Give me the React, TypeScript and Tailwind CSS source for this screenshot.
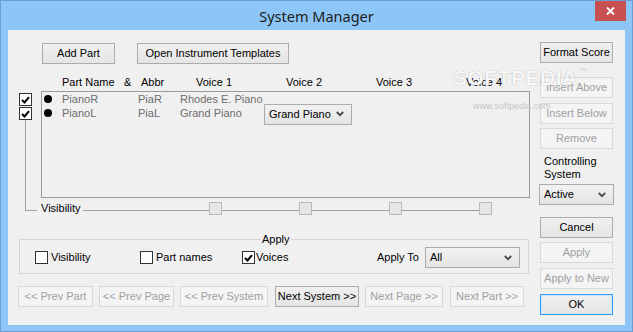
import React from "react";

function Check({ checked = false }: { checked?: boolean }) {
  return (
    <div className="w-[13px] h-[13px] border border-[#333333] bg-white flex items-center justify-center shrink-0">
      {checked && (
        <svg width="9" height="8" viewBox="0 0 9 8">
          <path d="M1 4 L3.5 6.5 L8 1.2" fill="none" stroke="#000" strokeWidth="2" />
        </svg>
      )}
    </div>
  );
}

function Btn({
  label,
  cls,
  disabled = false,
  def = false,
}: {
  label: string;
  cls: string;
  disabled?: boolean;
  def?: boolean;
}) {
  const look = disabled
    ? "border-[#d9d9d9] bg-[#f4f4f4] text-[#a0a0a0]"
    : def
    ? "border-[#3399ff] bg-linear-to-b from-[#f0f0f0] to-[#e5e5e5] text-black shadow-[inset_0_0_0_1px_#cfe6fc]"
    : "border-[#acacac] bg-linear-to-b from-[#f0f0f0] to-[#e5e5e5] text-black";
  return (
    <div className={`h-[21px] flex items-center justify-center shrink-0 border whitespace-nowrap ${look} ${cls}`}>
      {label}
    </div>
  );
}

function Chevron() {
  return (
    <svg width="8" height="6" viewBox="0 0 8 6">
      <path d="M0.8 1 L4 4.2 L7.2 1" fill="none" stroke="#4a4a4a" strokeWidth="1.8" />
    </svg>
  );
}

function Select({ value, cls }: { value: string; cls: string }) {
  return (
    <div
      className={`h-[21px] border border-[#acacac] bg-linear-to-b from-[#f2f2f2] to-[#e4e4e4] flex items-center justify-between pl-[4px] pr-[7px] shrink-0 text-black ${cls}`}
    >
      <span>{value}</span>
      <Chevron />
    </div>
  );
}

function Sq() {
  return <div className="w-[13px] h-[13px] border border-[#b9b9b9] bg-[#e6e6e6] shrink-0" />;
}

export default function App() {
  return (
    <div className="relative w-[633px] h-[332px] bg-[#8cc5f6] border border-[#6b9fd2] flex flex-col overflow-hidden font-['Liberation_Sans',Arial,sans-serif] text-[11px] leading-[13px] text-black">
      {/* Title bar */}
      <div className="relative h-[29px] shrink-0 flex justify-center pt-[5px]">
        <span className="font-['Noto_Sans',sans-serif] text-[14.5px] leading-[20px] text-[#1c1c1c]">
          System Manager
        </span>
        <div className="absolute right-[6px] top-0 w-[31px] h-[20px] bg-[#c75050] flex items-center justify-center">
          <svg width="9" height="8" viewBox="0 0 9 8">
            <path d="M1 0.5 L8 7.5 M8 0.5 L1 7.5" stroke="#fff" strokeWidth="1.9" />
          </svg>
        </div>
      </div>

      {/* Client */}
      <div className="mx-[7px] h-[295px] shrink-0 bg-[#f0f0f0] flex">
        {/* Left column */}
        <div className="w-[523px] shrink-0 flex flex-col items-start">
          <div className="mt-[13px] ml-[34px] flex">
            <Btn label="Add Part" cls="w-[73px]" />
            <Btn label="Open Instrument Templates" cls="w-[152px] ml-[22px]" />
          </div>

          <div className="mt-[12px] ml-[54px] flex h-[13px] whitespace-nowrap">
            <div className="w-[62px]">Part Name</div>
            <div className="w-[17px]">&amp;</div>
            <div className="w-[55px]">Abbr</div>
            <div className="w-[90px]">Voice 1</div>
            <div className="w-[90px]">Voice 2</div>
            <div className="w-[90px]">Voice 3</div>
            <div>Voice 4</div>
          </div>

          {/* List section */}
          <div className="mt-[2px] flex h-[107px]">
            <div className="w-[33px] flex flex-col">
              <div className="ml-[11px] mt-[2px] flex flex-col gap-[1px]">
                <Check checked />
                <Check checked />
              </div>
              <div className="ml-[17px] w-px flex-1 bg-[#a0a0a0]" />
            </div>
            <div className="w-[489px] h-full border border-[#9a9a9a] whitespace-nowrap">
              <div className="flex h-[14px] items-center text-[#6d6d6d]">
                <div className="w-[20px] pl-[2px]">
                  <div className="w-[8px] h-[8px] rounded-full bg-black" />
                </div>
                <div className="w-[76px]">PianoR</div>
                <div className="w-[42px]">PiaR</div>
                <div className="w-[84px]">Rhodes E. Piano</div>
              </div>
              <div className="flex h-[14px] items-center text-[#6d6d6d]">
                <div className="w-[20px] pl-[2px]">
                  <div className="w-[8px] h-[8px] rounded-full bg-black" />
                </div>
                <div className="w-[76px]">PianoL</div>
                <div className="w-[42px]">PiaL</div>
                <div className="w-[84px]">Grand Piano</div>
                <Select value="Grand Piano" cls="w-[88px] mt-[2px]" />
              </div>
            </div>
          </div>

          {/* Visibility row */}
          <div className="flex h-[24px] items-start">
            <div className="ml-[17px] w-[12px] h-[13px] border-l border-b border-[#a0a0a0]" />
            <div className="ml-[4px] w-[42px] mt-[4px]">Visibility</div>
            <div className="mt-[4px] flex items-start">
              <div className="w-[126px] h-px bg-[#a0a0a0] mt-[8px]" />
              <Sq />
              <div className="w-[77px] h-px bg-[#a0a0a0] mt-[8px]" />
              <Sq />
              <div className="w-[77px] h-px bg-[#a0a0a0] mt-[8px]" />
              <Sq />
              <div className="w-[77px] h-px bg-[#a0a0a0] mt-[8px]" />
              <Sq />
            </div>
          </div>

          {/* Apply group */}
          <div className="relative mt-[17px] ml-[11px] w-[510px] h-[35px] border border-[#d5d5d5] flex items-center pl-[15px] pt-[2px] whitespace-nowrap">
            <div className="absolute -top-[7px] left-[241px] px-[1px] bg-[#f0f0f0]">Apply</div>
            <div className="w-[105px] flex items-center gap-[3px]">
              <Check />
              <span>Visibility</span>
            </div>
            <div className="w-[102px] flex items-center gap-[3px]">
              <Check />
              <span>Part names</span>
            </div>
            <div className="w-[135px] flex items-center gap-[1px]">
              <Check checked />
              <span>Voices</span>
            </div>
            <div className="w-[48px]">Apply To</div>
            <Select value="All" cls="w-[95px]" />
          </div>

          {/* Navigation buttons */}
          <div className="mt-[12px] ml-[10px] flex">
            <Btn label="<< Prev Part" cls="w-[75px]" disabled />
            <Btn label="<< Prev Page" cls="w-[75px] ml-[6px]" disabled />
            <Btn label="<< Prev System" cls="w-[88px] ml-[6px]" disabled />
            <Btn label="Next System >>" cls="w-[84px] ml-[7px]" />
            <Btn label="Next Page >>" cls="w-[78px] ml-[6px]" disabled />
            <Btn label="Next Part >>" cls="w-[74px] ml-[7px]" disabled />
          </div>
        </div>

        {/* Right column */}
        <div className="ml-[8px] w-[75px] flex flex-col items-start">
          <Btn label="Format Score" cls="mt-[12px] ml-[1px] w-[73px]" />
          <Btn label="Insert Above" cls="mt-[14px] ml-[1px] w-[73px]" disabled />
          <Btn label="Insert Below" cls="mt-[5px] ml-[1px] w-[73px]" disabled />
          <Btn label="Remove" cls="mt-[4px] ml-[1px] w-[73px]" disabled />
          <div className="mt-[6px] ml-[5px] leading-[13px]">
            <div>Controlling</div>
            <div>System</div>
          </div>
          <Select value="Active" cls="mt-[3px] w-[75px]" />
          <Btn label="Cancel" cls="mt-[12px] ml-[1px] w-[73px]" />
          <Btn label="Apply" cls="mt-[4px] ml-[1px] w-[73px]" disabled />
          <Btn label="Apply to New" cls="mt-[5px] ml-[1px] w-[73px]" disabled />
          <Btn label="OK" cls="mt-[5px] ml-[1px] w-[73px]" def />
        </div>
      </div>

      {/* Watermark overlay */}
      <div className="absolute left-[452px] top-[66px] pointer-events-none">
        <div className="flex items-start">
          <span className="text-[21px] leading-none font-bold tracking-[0.5px] text-[#f7f7f7] [text-shadow:0_0_1px_#9c9c9c]">
            SOFTPEDIA
          </span>
          <span className="text-[7px] leading-none text-[#cfcfcf] ml-[2px]">™</span>
        </div>
        <div className="ml-[20px] mt-[14px] text-[9px] leading-none text-[#c6c6c6]">www.softpedia.com</div>
      </div>
    </div>
  );
}
